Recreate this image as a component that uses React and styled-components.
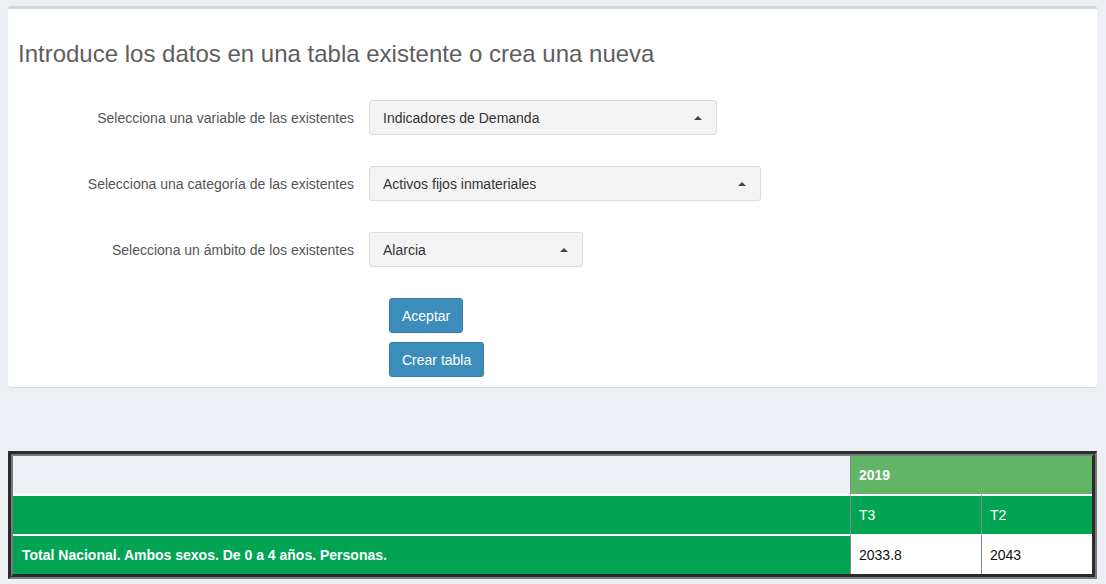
import React from 'react'
import styled, { createGlobalStyle } from 'styled-components'

const GlobalStyle = createGlobalStyle`
body{
    margin: 0;
    background: #ecf0f5;
    font-family: "Liberation Sans", Arial, sans-serif;
}
`

const fields = [
    { label: 'Selecciona una variable de las existentes', value: 'Indicadores de Demanda', width: 348 },
    { label: 'Selecciona una categoría de las existentes', value: 'Activos fijos inmateriales', width: 392 },
    { label: 'Selecciona un ámbito de los existentes', value: 'Alarcia', width: 214 },
]

const App = () =>{
    return(
        <Page>
            <GlobalStyle/>
            <Box>
                <Title>Introduce los datos en una tabla existente o crea una nueva</Title>
                <Form>
                    {fields.map((f)=>(
                        <Row key={f.label}>
                            <Label>{f.label}</Label>
                            <Select $width={f.width}>
                                <span>{f.value}</span>
                                <Caret/>
                            </Select>
                        </Row>
                    ))}
                    <Buttons>
                        <Button>Aceptar</Button>
                        <Button>Crear tabla</Button>
                    </Buttons>
                </Form>
            </Box>
            <TableWrap>
                <Table>
                    <colgroup>
                        <col/>
                        <col style={{width: 131}}/>
                        <col style={{width: 111}}/>
                    </colgroup>
                    <tbody>
                        <tr>
                            <Cell $kind="empty"></Cell>
                            <Cell $kind="year" colSpan={2}>2019</Cell>
                        </tr>
                        <tr>
                            <Cell $kind="head"></Cell>
                            <Cell $kind="head" $divider>T3</Cell>
                            <Cell $kind="head" $divider>T2</Cell>
                        </tr>
                        <tr>
                            <Cell $kind="rowName">Total Nacional. Ambos sexos. De 0 a 4 años. Personas.</Cell>
                            <Cell $kind="data" $divider>2033.8</Cell>
                            <Cell $kind="data" $divider>2043</Cell>
                        </tr>
                    </tbody>
                </Table>
            </TableWrap>
        </Page>
    )
}

const Page = styled.div`
padding: 6px 9px 0 8px;
`
const Box = styled.div`
background: #fff;
border-top: 3px solid #d2d6de;
border-radius: 3px;
box-shadow: 0 1px 1px rgba(0,0,0,0.1);
padding: 0 0 10px 0;
`
const Title = styled.h3`
margin: 0;
padding: 31px 10px 0 10px;
font-size: 24px;
font-weight: 400;
color: #5e5e5e;
line-height: 28px;
`
const Form = styled.div`
display: flex;
flex-direction: column;
padding-top: 32px;
`
const Row = styled.div`
display: flex;
align-items: center;
height: 35px;
margin-bottom: 31px;
`
const Label = styled.label`
width: 346px;
padding-right: 15px;
text-align: right;
font-size: 14px;
color: #555;
`
const Select = styled.div`
box-sizing: border-box;
width: ${(p)=> p.$width}px;
height: 35px;
display: flex;
align-items: center;
justify-content: space-between;
padding: 0 14px 0 13px;
background: #f3f3f3;
border: 1px solid #dcdcdc;
border-radius: 3px;
font-size: 14px;
color: #333;
`
const Caret = styled.span`
width: 0;
height: 0;
border-left: 4px solid transparent;
border-right: 4px solid transparent;
border-bottom: 4px solid #444;
`
const Buttons = styled.div`
display: flex;
flex-direction: column;
align-items: flex-start;
gap: 9px;
padding-left: 381px;
`
const Button = styled.button`
height: 35px;
padding: 0 12px;
background: #3c8dbc;
border: 1px solid #367fa9;
border-radius: 3px;
color: #fff;
font-family: "Liberation Sans", Arial, sans-serif;
font-size: 14px;
`
const TableWrap = styled.div`
margin-top: 64px;
border-top: 3px solid #2b2b2b;
border-left: 3px solid #2b2b2b;
border-right: 2px solid #7a7a7a;
border-bottom: 2px solid #7a7a7a;
`
const Table = styled.table`
width: 100%;
border-collapse: separate;
border-spacing: 0;
table-layout: fixed;
border-top: 2px solid #7a7a7a;
border-left: 2px solid #7a7a7a;
border-right: 3px solid #2b2b2b;
border-bottom: 3px solid #2b2b2b;
font-size: 14px;
tr{
    height: 38px;
}
tr + tr{
    height: 40px;
}
tr + tr td{
    border-top: 2px solid #fff;
}
`
const cellBg = {
    empty: '#ecf0f5',
    year: '#62b566',
    head: '#00a452',
    rowName: '#00a452',
    data: '#fff',
}
const Cell = styled.td`
padding: 0 8px;
background: ${(p)=> cellBg[p.$kind]};
color: ${(p)=> p.$kind === 'data' ? '#111' : '#fff'};
font-weight: ${(p)=> p.$kind === 'year' || p.$kind === 'rowName' ? 700 : 400};
border-left: ${(p)=> p.$divider || p.$kind === 'year' ? '1px solid #888' : 'none'};
padding-left: ${(p)=> p.$kind === 'rowName' ? '9px' : '8px'};
`

export default App
